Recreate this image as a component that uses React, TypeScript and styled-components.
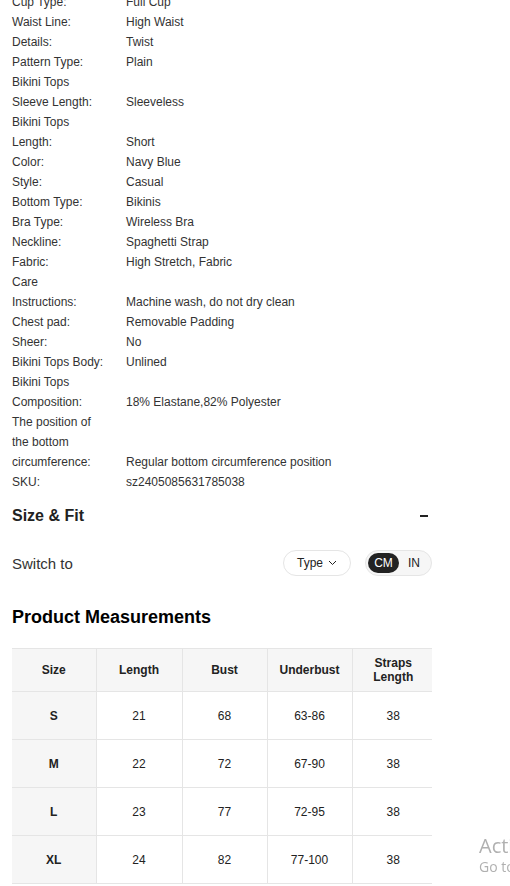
import React from "react";
import styled, { createGlobalStyle } from "styled-components";

const specs: [string[], string][] = [
  [["Cup Type:"], "Full Cup"],
  [["Waist Line:"], "High Waist"],
  [["Details:"], "Twist"],
  [["Pattern Type:"], "Plain"],
  [["Bikini Tops", "Sleeve Length:"], "Sleeveless"],
  [["Bikini Tops", "Length:"], "Short"],
  [["Color:"], "Navy Blue"],
  [["Style:"], "Casual"],
  [["Bottom Type:"], "Bikinis"],
  [["Bra Type:"], "Wireless Bra"],
  [["Neckline:"], "Spaghetti Strap"],
  [["Fabric:"], "High Stretch, Fabric"],
  [["Care", "Instructions:"], "Machine wash, do not dry clean"],
  [["Chest pad:"], "Removable Padding"],
  [["Sheer:"], "No"],
  [["Bikini Tops Body:"], "Unlined"],
  [["Bikini Tops", "Composition:"], "18% Elastane,82% Polyester"],
  [["The position of", "the bottom", "circumference:"], "Regular bottom circumference position"],
  [["SKU:"], "sz2405085631785038"],
];

const headers = ["Size", "Length", "Bust", "Underbust", "Straps Length"];
const rows = [
  ["S", "21", "68", "63-86", "38"],
  ["M", "22", "72", "67-90", "38"],
  ["L", "23", "77", "72-95", "38"],
  ["XL", "24", "82", "77-100", "38"],
];
const colWidths = [84, 86, 85, 85, 82];

const GlobalStyle = createGlobalStyle`
  html, body {
    margin: 0;
    padding: 0;
    background: #fff;
    overflow: hidden;
  }
  body {
    font-family: "Liberation Sans", Arial, sans-serif;
    color: #222;
  }
`;

const Page = styled.div`
  padding: 0 12px;
  width: 420px;
`;

const SpecList = styled.div`
  margin-top: -8px;
  display: flex;
  flex-direction: column;
`;

const SpecRow = styled.div`
  display: flex;
  align-items: flex-end;
  font-size: 12px;
  line-height: 20px;
  color: #333;
`;

const SpecKey = styled.div`
  width: 114px;
  flex-shrink: 0;
`;

const SpecVal = styled.div`
  flex: 1;
`;

const SectionHead = styled.div`
  display: flex;
  align-items: center;
  justify-content: space-between;
  height: 48px;
  font-size: 16px;
  font-weight: bold;
  color: #222;
`;

const Minus = styled.span`
  width: 8px;
  height: 2px;
  background: #222;
  margin-right: 4px;
`;

const SwitchRow = styled.div`
  margin-top: 10px;
  display: flex;
  align-items: center;
  height: 26px;
`;

const SwitchLabel = styled.div`
  flex: 1;
  font-size: 15px;
  color: #333;
`;

const TypePill = styled.div`
  display: flex;
  align-items: center;
  justify-content: center;
  gap: 5px;
  width: 66px;
  height: 24px;
  border: 1px solid #e5e5e5;
  border-radius: 13px;
  font-size: 12px;
  color: #222;
  margin-right: 14px;
`;

const UnitToggle = styled.div`
  display: flex;
  align-items: center;
  width: 62px;
  height: 24px;
  padding: 0 1px 0 2px;
  border: 1px solid #e5e5e5;
  border-radius: 13px;
  background: #f6f6f6;
`;

const Unit = styled.span<{ $active?: boolean }>`
  display: flex;
  align-items: center;
  justify-content: center;
  width: ${(p) => (p.$active ? "31px" : "30px")};
  height: 20px;
  border-radius: 10px;
  font-size: 12px;
  background: ${(p) => (p.$active ? "#222" : "transparent")};
  color: ${(p) => (p.$active ? "#fff" : "#222")};
`;

const Title = styled.h2`
  margin: 29px 0 19px;
  font-size: 18px;
  line-height: 24px;
  font-weight: bold;
  color: #000;
`;

const TableWrap = styled.div`
  width: 420px;
  overflow: hidden;
`;

const Table = styled.table`
  border-collapse: collapse;
  table-layout: fixed;
  width: 422px;
  font-size: 12px;
  color: #222;
  text-align: center;
`;

const Th = styled.th`
  height: 42px;
  padding: 0 4px;
  background: #f6f6f6;
  font-weight: bold;
  line-height: 14px;
  border-top: 1px solid #e5e5e5;
  border-bottom: 1px solid #e5e5e5;
  border-left: 1px solid #e5e5e5;
  &:first-child {
    border-left: none;
  }
`;

const Td = styled.td<{ $head?: boolean }>`
  height: 47px;
  padding: 0;
  border-bottom: 1px solid #e5e5e5;
  border-left: ${(p) => (p.$head ? "none" : "1px solid #e5e5e5")};
  background: ${(p) => (p.$head ? "#f6f6f6" : "#fff")};
  font-weight: ${(p) => (p.$head ? "bold" : "normal")};
`;

const Watermark = styled.div`
  position: fixed;
  left: 479px;
  top: 836px;
  font-family: "Open Sans", "Noto Sans", sans-serif;
  color: rgba(150, 150, 150, 0.75);
  white-space: nowrap;
  line-height: 1;
`;

const WmBig = styled.div`
  font-size: 20px;
  margin-bottom: 4px;
`;

const WmSmall = styled.div`
  font-size: 14px;
`;

const Chevron = () => (
  <svg width="9" height="6" viewBox="0 0 9 6" fill="none">
    <path d="M1 1l3.5 3.5L8 1" stroke="#222" strokeWidth="1" />
  </svg>
);

export default function App() {
  return (
    <>
      <GlobalStyle />
      <Page>
        <SpecList>
          {specs.map(([k, v], i) => (
            <SpecRow key={i}>
              <SpecKey>
                {k.map((line, j) => (
                  <div key={j}>{line}</div>
                ))}
              </SpecKey>
              <SpecVal>{v}</SpecVal>
            </SpecRow>
          ))}
        </SpecList>

        <SectionHead>
          <span>Size &amp; Fit</span>
          <Minus />
        </SectionHead>

        <SwitchRow>
          <SwitchLabel>Switch to</SwitchLabel>
          <TypePill>
            Type <Chevron />
          </TypePill>
          <UnitToggle>
            <Unit $active>CM</Unit>
            <Unit>IN</Unit>
          </UnitToggle>
        </SwitchRow>

        <Title>Product Measurements</Title>

        <TableWrap>
          <Table>
            <colgroup>
              {colWidths.map((w, i) => (
                <col key={i} style={{ width: w }} />
              ))}
            </colgroup>
            <thead>
              <tr>
                {headers.map((h) => (
                  <Th key={h}>{h}</Th>
                ))}
              </tr>
            </thead>
            <tbody>
              {rows.map((r) => (
                <tr key={r[0]}>
                  {r.map((c, i) => (
                    <Td key={i} $head={i === 0}>
                      {c}
                    </Td>
                  ))}
                </tr>
              ))}
            </tbody>
          </Table>
        </TableWrap>
      </Page>
      <Watermark>
        <WmBig>Activate Windows</WmBig>
        <WmSmall>Go to Settings to activate Windows.</WmSmall>
      </Watermark>
    </>
  );
}
